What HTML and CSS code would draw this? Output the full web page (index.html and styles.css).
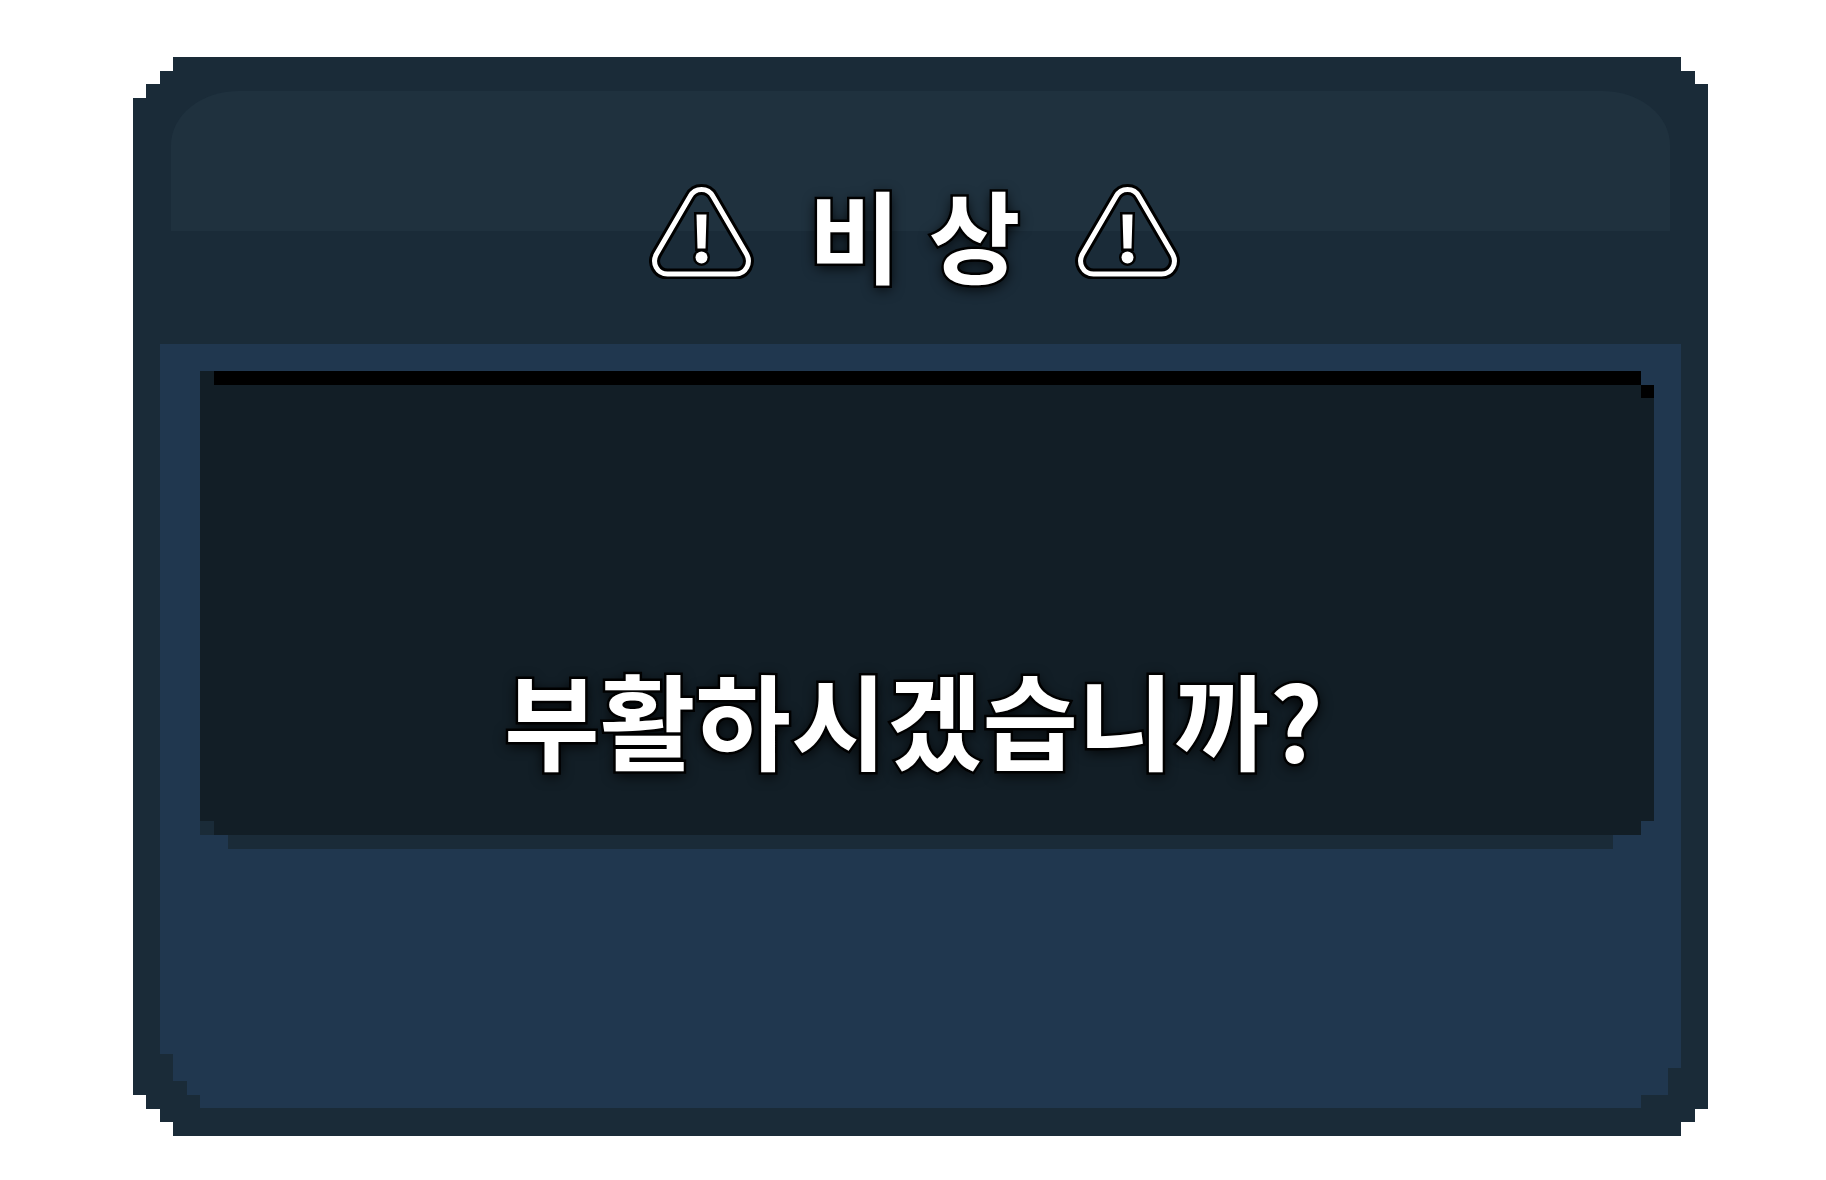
FILE: index.html
```html
<!DOCTYPE html>
<html lang="ko">
<head>
<meta charset="utf-8">
<meta name="viewport" content="width=device-width, initial-scale=1">
<title>비상</title>
<link rel="stylesheet" href="styles.css">
</head>
<body>
<svg class="symbols" aria-hidden="true">
  <symbol id="warning" viewBox="0 0 106 96">
    <path d="M41 13.500C46 4.200 59 4.200 64 13.500L97.500 71C102.500 80 97 91 86.500 91H18.500C8 91 2.500 80 7.500 71Z" fill="none" stroke="#000" stroke-width="11"/>
    <path d="M41 13.500C46 4.200 59 4.200 64 13.500L97.500 71C102.500 80 97 91 86.500 91H18.500C8 91 2.500 80 7.500 71Z" fill="none" stroke="#fff" stroke-width="5"/>
    <g fill="#fff" stroke="#000" stroke-width="5" paint-order="stroke">
      <path d="M47.500 31.500H57.500L56.500 65.500H48.500Z"/>
      <circle cx="52.500" cy="74.500" r="6"/>
    </g>
  </symbol>
</svg>
<main class="dialog" role="alertdialog" aria-labelledby="title" aria-describedby="message">
  <header class="dialog-header">
    <div class="gloss"></div>
    <h1 class="title" id="title">
      <svg class="warning" aria-hidden="true"><use href="#warning"/></svg>
      <span>비 상</span>
      <svg class="warning" aria-hidden="true"><use href="#warning"/></svg>
    </h1>
  </header>
  <section class="dialog-body">
    <div class="screen">
      <p class="message" id="message">부활하시겠습니까?</p>
    </div>
    <div class="screen-lip"></div>
  </section>
</main>
</body>
</html>
```
FILE: styles.css
```css
* {
  box-sizing: border-box;
}

body {
  margin: 0;
  min-height: 100vh;
  padding: 57px 118px 44px 133px;
  display: flex;
  background: #fff;
  color: #fff;
  font-family: "Noto Sans CJK KR", "Noto Sans", sans-serif;
}

.symbols {
  position: absolute;
  width: 0;
  height: 0;
}

.dialog {
  flex: 1;
  min-width: 0;
  display: flex;
  flex-direction: column;
  padding: 0 27px 28px;
  background: #1a2b38;
  clip-path: polygon(
    40px 0, calc(100% - 27px) 0,
    calc(100% - 27px) 14px, calc(100% - 13px) 14px,
    calc(100% - 13px) 27px, 100% 27px,
    100% calc(100% - 27px), calc(100% - 13px) calc(100% - 27px),
    calc(100% - 13px) calc(100% - 14px), calc(100% - 27px) calc(100% - 14px),
    calc(100% - 27px) 100%, 40px 100%,
    40px calc(100% - 14px), 27px calc(100% - 14px),
    27px calc(100% - 27px), 13px calc(100% - 27px),
    13px calc(100% - 41px), 0 calc(100% - 41px),
    0 41px, 13px 41px,
    13px 27px, 27px 27px,
    27px 14px, 40px 14px
  );
}

.dialog-header {
  position: relative;
  height: 287px;
  padding-top: 116px;
}

/* Lighter sheen behind the title */
.gloss {
  position: absolute;
  inset: 34px 11px auto;
  height: 140px;
  border-radius: 68px 68px 0 0 / 54px 54px 0 0;
  background: #1f313e;
}

.title {
  position: relative;
  display: flex;
  justify-content: center;
  align-items: center;
  gap: 54px;
  margin: 0;
  padding-right: 12px;
  font-size: 100px;
}

.warning {
  width: 106px;
  height: 96px;
  overflow: visible;
  margin-bottom: 4px;
}

.message {
  margin: 0;
  font-size: 104px;
}

.title,
.message {
  font-weight: 700;
  line-height: 120px;
  white-space: nowrap;
  -webkit-text-stroke: 5px #000;
  paint-order: stroke fill;
  text-shadow: 0 3px 14px #000;
}

.dialog-body {
  flex: 1;
  padding: 27px 27px 0 40px;
  background: #20374f;
  clip-path: polygon(
    0 0, 100% 0,
    100% calc(100% - 40px), calc(100% - 13px) calc(100% - 40px),
    calc(100% - 13px) calc(100% - 13px), calc(100% - 40px) calc(100% - 13px),
    calc(100% - 40px) 100%, 40px 100%,
    40px calc(100% - 13px), 27px calc(100% - 13px),
    27px calc(100% - 27px), 13px calc(100% - 27px),
    13px calc(100% - 54px), 0 calc(100% - 54px)
  );
}

.screen {
  height: 464px;
  display: flex;
  justify-content: center;
  align-items: flex-end;
  padding: 0 27px 57px 0;
  background:
    linear-gradient(#000, #000) 14px 0 / calc(100% - 27px) 14px no-repeat,
    linear-gradient(#000, #000) 100% 14px / 13px 13px no-repeat,
    linear-gradient(#1a2b38, #1a2b38) 0 100% / 14px 14px no-repeat,
    #121e26;
  clip-path: polygon(
    0 0, calc(100% - 13px) 0,
    calc(100% - 13px) 14px, 100% 14px,
    100% calc(100% - 14px), calc(100% - 13px) calc(100% - 14px),
    calc(100% - 13px) 100%, 0 100%
  );
}

.screen-lip {
  height: 14px;
  margin: 0 41px 0 28px;
  background: #1a2b38;
}
```
